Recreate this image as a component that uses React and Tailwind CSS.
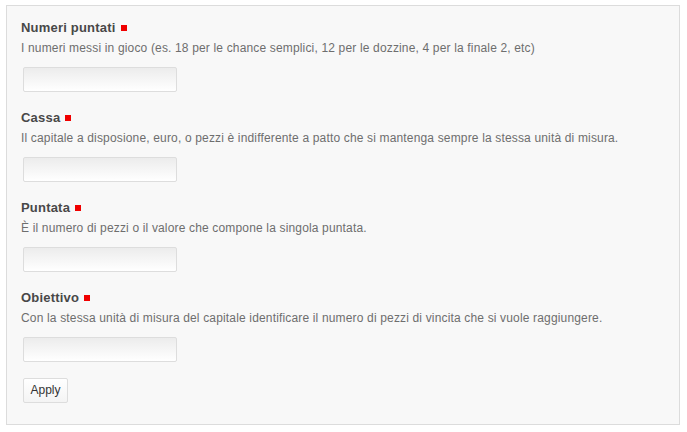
import React from 'react';

const fields = [
    { label: 'Numeri puntati', help: 'I numeri messi in gioco (es. 18 per le chance semplici, 12 per le dozzine, 4 per la finale 2, etc)' },
    { label: 'Cassa', help: 'Il capitale a disposione, euro, o pezzi è indifferente a patto che si mantenga sempre la stessa unità di misura.' },
    { label: 'Puntata', help: 'È il numero di pezzi o il valore che compone la singola puntata.' },
    { label: 'Obiettivo', help: 'Con la stessa unità di misura del capitale identificare il numero di pezzi di vincita che si vuole raggiungere.' },
];

const Field = ({ label, help }) => (
    <div className="flex flex-col items-start pb-[15px]">
        <div className="flex items-center h-[20px] mt-[1px] -mb-[1px] text-[13px] font-bold tracking-[0.2px] text-[#484848]">
            {label}
            <span className="ml-[5px] w-[6px] h-[6px] bg-[#f00000]" />
        </div>
        <p className="mt-[2px] h-[18px] leading-[18px] text-[12px] tracking-[0.16px] text-[#6e6e6e]">{help}</p>
        <input
            type="text"
            className="mt-[10px] ml-[2px] w-[154px] h-[25px] rounded-[2px] border border-[#dddddd] bg-gradient-to-b from-[#ececec] to-white outline-none"
        />
    </div>
);

export default function App() {
    return (
        <div className="w-[687px] h-[432px] bg-white pt-[5px] pl-[6px]" style={{ fontFamily: '"Liberation Sans", Arial, sans-serif' }}>
            <div className="w-[674px] h-[420px] border border-[#dcdcdc] bg-[#f8f8f8] pt-[11px] pl-[14px]">
                {fields.map((f) => (
                    <Field key={f.label} {...f} />
                ))}
                <button className="ml-[2px] w-[45px] h-[25px] rounded-[2px] border border-[#dddddd] bg-gradient-to-b from-white to-[#f4f4f4] text-[12px] text-[#333]">
                    Apply
                </button>
            </div>
        </div>
    );
}
